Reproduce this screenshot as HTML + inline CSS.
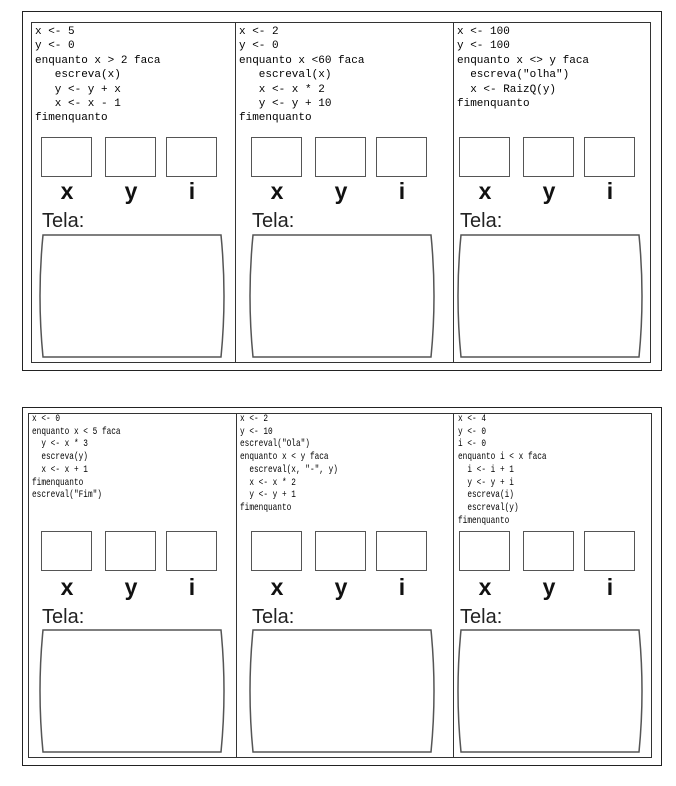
<!DOCTYPE html>
<html><head><meta charset="utf-8"><style>
body{margin:0;width:676px;height:786px;background:#fff;position:relative;overflow:hidden;font-family:"Liberation Sans",sans-serif}
.a{position:absolute}
.outer{border:1.5px solid #222;box-sizing:border-box}
.inner{border:1px solid #333;box-sizing:border-box}
.vl{position:absolute;width:1px;background:#333}
pre{position:absolute;margin:0;font-family:"Liberation Mono",monospace;color:#000}
.t pre{font-size:11px;line-height:14.4px}
.b pre{font-size:10.5px;line-height:12.7px;transform:scaleX(0.74);transform-origin:0 0}
.box{position:absolute;width:51px;height:40px;border:1.5px solid #555;box-sizing:border-box}
.lab{position:absolute;font-weight:bold;font-size:23px;width:52px;text-align:center;color:#111}
.tela{position:absolute;font-size:20px;color:#222}
svg{position:absolute}
</style></head><body>
<div class="a outer" style="left:22px;top:11px;width:640px;height:360px"></div>
<div class="a inner" style="left:31px;top:22px;width:620px;height:341px"></div>
<div class="vl" style="left:235px;top:22px;height:341px"></div>
<div class="vl" style="left:453px;top:22px;height:341px"></div>

<div class="a outer" style="left:22px;top:407px;width:640px;height:359px"></div>
<div class="a inner" style="left:28px;top:413px;width:624px;height:345px"></div>
<div class="vl" style="left:236px;top:413px;height:345px"></div>
<div class="vl" style="left:453px;top:413px;height:345px"></div>

<div class="t">
<pre style="left:35px;top:25px">x &lt;- 5
y &lt;- 0
enquanto x &gt; 2 faca
   escreva(x)
   y &lt;- y + x
   x &lt;- x - 1
fimenquanto</pre>
<pre style="left:239px;top:25px">x &lt;- 2
y &lt;- 0
enquanto x &lt;60 faca
   escreval(x)
   x &lt;- x * 2
   y &lt;- y + 10
fimenquanto</pre>
<pre style="left:457px;top:25px">x &lt;- 100
y &lt;- 100
enquanto x &lt;&gt; y faca
  escreva("olha")
  x &lt;- RaizQ(y)
fimenquanto</pre>
</div>
<div class="b">
<pre style="left:32px;top:413px">x &lt;- 0
enquanto x &lt; 5 faca
  y &lt;- x * 3
  escreva(y)
  x &lt;- x + 1
fimenquanto
escreval("Fim")</pre>
<pre style="left:240px;top:413px">x &lt;- 2
y &lt;- 10
escreval("Ola")
enquanto x &lt; y faca
  escreval(x, "-", y)
  x &lt;- x * 2
  y &lt;- y + 1
fimenquanto</pre>
<pre style="left:458px;top:413px">x &lt;- 4
y &lt;- 0
i &lt;- 0
enquanto i &lt; x faca
  i &lt;- i + 1
  y &lt;- y + i
  escreva(i)
  escreval(y)
fimenquanto</pre>
</div>

<div class="box" style="left:41px;top:137px"></div><div class="box" style="left:105px;top:137px"></div><div class="box" style="left:166px;top:137px"></div>
<div class="lab" style="left:41px;top:178px">x</div><div class="lab" style="left:105px;top:178px">y</div><div class="lab" style="left:166px;top:178px">i</div>
<div class="tela" style="left:42px;top:210px">Tela:</div>
<svg style="left:36px;top:234px" width="192" height="126"><path d="M7,1 H185 Q191,62 185,123 H7 Q1,62 7,1 Z" fill="none" stroke="#555" stroke-width="1.5"/></svg>

<div class="box" style="left:251px;top:137px"></div><div class="box" style="left:315px;top:137px"></div><div class="box" style="left:376px;top:137px"></div>
<div class="lab" style="left:251px;top:178px">x</div><div class="lab" style="left:315px;top:178px">y</div><div class="lab" style="left:376px;top:178px">i</div>
<div class="tela" style="left:252px;top:210px">Tela:</div>
<svg style="left:246px;top:234px" width="192" height="126"><path d="M7,1 H185 Q191,62 185,123 H7 Q1,62 7,1 Z" fill="none" stroke="#555" stroke-width="1.5"/></svg>

<div class="box" style="left:459px;top:137px"></div><div class="box" style="left:523px;top:137px"></div><div class="box" style="left:584px;top:137px"></div>
<div class="lab" style="left:459px;top:178px">x</div><div class="lab" style="left:523px;top:178px">y</div><div class="lab" style="left:584px;top:178px">i</div>
<div class="tela" style="left:460px;top:210px">Tela:</div>
<svg style="left:454px;top:234px" width="192" height="126"><path d="M7,1 H185 Q191,62 185,123 H7 Q1,62 7,1 Z" fill="none" stroke="#555" stroke-width="1.5"/></svg>

<div class="box" style="left:41px;top:531px"></div><div class="box" style="left:105px;top:531px"></div><div class="box" style="left:166px;top:531px"></div>
<div class="lab" style="left:41px;top:574px">x</div><div class="lab" style="left:105px;top:574px">y</div><div class="lab" style="left:166px;top:574px">i</div>
<div class="tela" style="left:42px;top:606px">Tela:</div>
<svg style="left:36px;top:629px" width="192" height="126"><path d="M7,1 H185 Q191,62 185,123 H7 Q1,62 7,1 Z" fill="none" stroke="#555" stroke-width="1.5"/></svg>

<div class="box" style="left:251px;top:531px"></div><div class="box" style="left:315px;top:531px"></div><div class="box" style="left:376px;top:531px"></div>
<div class="lab" style="left:251px;top:574px">x</div><div class="lab" style="left:315px;top:574px">y</div><div class="lab" style="left:376px;top:574px">i</div>
<div class="tela" style="left:252px;top:606px">Tela:</div>
<svg style="left:246px;top:629px" width="192" height="126"><path d="M7,1 H185 Q191,62 185,123 H7 Q1,62 7,1 Z" fill="none" stroke="#555" stroke-width="1.5"/></svg>

<div class="box" style="left:459px;top:531px"></div><div class="box" style="left:523px;top:531px"></div><div class="box" style="left:584px;top:531px"></div>
<div class="lab" style="left:459px;top:574px">x</div><div class="lab" style="left:523px;top:574px">y</div><div class="lab" style="left:584px;top:574px">i</div>
<div class="tela" style="left:460px;top:606px">Tela:</div>
<svg style="left:454px;top:629px" width="192" height="126"><path d="M7,1 H185 Q191,62 185,123 H7 Q1,62 7,1 Z" fill="none" stroke="#555" stroke-width="1.5"/></svg>
</body></html>
